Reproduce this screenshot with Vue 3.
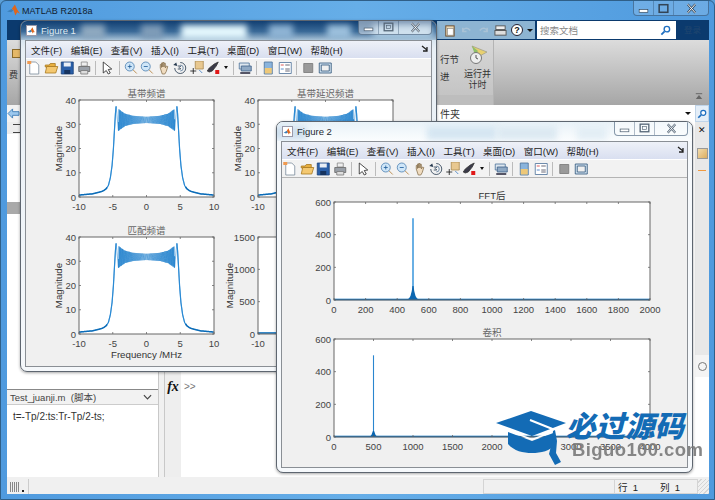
<template>
  <div class="desktop">
    <div class="main-window">
      <div class="main-title">
        <svg class="logo" viewBox="0 0 14 14"><path d="M0 8l3-1.500 2-1 2 1.500-2.500 2z" fill="#3c7fb8" /><path d="M5 5.500L8.500 0.500 11 6l3 4.500-3-1.500-2 3.500-2-6z" fill="#e0661c" /></svg>
        <span>MATLAB R2018a</span>
        <div class="captions main-captions">
          <span class="cap cap-min"><svg viewBox="0 0 12 10"><rect x="2" y="6" width="8" height="2.500" fill="#fff" stroke="#345" stroke-width=".6" /></svg></span>
          <span class="cap cap-max"><svg viewBox="0 0 12 10"><rect x="2" y="1.500" width="8" height="7" fill="none" stroke="#345" stroke-width="1.400" /></svg></span>
          <span class="cap cap-close"><svg viewBox="0 0 12 10"><path d="M2.500 1l7 8M9.500 1l-7 8" stroke="#345" stroke-width="2" /><path d="M2.500 1l7 8M9.500 1l-7 8" stroke="#fff" stroke-width=".9" /></svg></span>
        </div>
      </div>

      <div class="client">
        <div class="top-strip">
          <div class="quick-bar">
            <svg viewBox="0 0 14 14"><rect x="3" y="2" width="9" height="11" fill="#e9d9b8" stroke="#6b4a2a" /><rect x="5" y="5" width="6" height="7" fill="#fff" stroke="#777" stroke-width=".6" /></svg>
            <svg viewBox="0 0 14 14"><path d="M3 8a4 4 0 0 1 7-2l1 1M3 4v4h4" fill="none" stroke="#a9c2d6" stroke-width="1.600" /></svg>
            <svg viewBox="0 0 14 14"><path d="M11 8a4 4 0 0 0-7-2l-1 1M11 4v4h-4" fill="none" stroke="#a9c2d6" stroke-width="1.600" /></svg>
            <svg viewBox="0 0 14 14"><rect x="2" y="2" width="10" height="4" fill="#eee" stroke="#555" /><rect x="1" y="7" width="12" height="5" fill="#ddd" stroke="#555" /></svg>
            <span class="help">?</span>
            <i class="tri"></i>
          </div>
          <div class="search-box">
            <span>搜索文档</span>
            <svg viewBox="0 0 12 12"><circle cx="7.500" cy="4.500" r="3" fill="#fff" stroke="#1f6fc0" stroke-width="1.500" /><path d="M5 7L1.500 10.500" stroke="#1f6fc0" stroke-width="2" /></svg>
          </div>
          <span class="login">登录</span>
        </div>

        <div class="ribbon">
          <div class="ribbon-left">
            <i class="mini-note"></i>
            <span>费</span>
          </div>
          <div class="ribbon-run">
            <div class="run-labels">
              <span>行节</span>
              <span>进</span>
            </div>
            <div class="run-button">
              <svg viewBox="0 0 20 20"><path d="M4 1l15 6-9 5z" fill="#e8d070" stroke="#998" stroke-width=".7" /><path d="M4 1l3 9 3-4z" fill="#8fbf6a" /><circle cx="8" cy="13" r="5.500" fill="#eee" stroke="#777" /><path d="M8 10v3l2 1" fill="none" stroke="#555" /></svg>
              <span>运行并<br />计时</span>
            </div>
          </div>
          <div class="ribbon-rest">
            <svg class="collapse" viewBox="0 0 10 8"><path d="M1 .500h8" stroke="#555" /><path d="M5 2l4 5H1z" fill="#666" /></svg>
          </div>
        </div>

        <div class="address">
          <svg class="back" viewBox="0 0 14 12"><path d="M1 6l5-5v3h7v4H6v3z" fill="#9cc8ee" stroke="#3f7fb8" /></svg>
          <div class="path">
            <span>件夹</span>
            <i class="tri"></i>
          </div>
          <span class="path-search"><svg viewBox="0 0 12 12"><circle cx="7.500" cy="4.500" r="3" fill="#fff" stroke="#1f6fc0" stroke-width="1.500" /><path d="M5 7L1.500 10.500" stroke="#1f6fc0" stroke-width="2" /></svg></span>
        </div>

        <div class="panes">
          <div class="left-col">
            <div class="browser">
              <div class="browser-head"><span class="list-icon"></span></div>
              <div class="browser-row"></div>
              <div class="browser-selected"></div>
            </div>
            <div class="details-head">
              <span>Test_juanji.m &nbsp;(脚本)</span>
              <svg viewBox="0 0 10 6"><path d="M1 1l4 4 4-4" fill="none" stroke="#444" stroke-width="1.300" /></svg>
            </div>
            <div class="details-body">t=-Tp/2:ts:Tr-Tp/2-ts;</div>
          </div>
          <div class="command">
            <div class="gutter"><span class="fx">fx</span></div>
            <span class="prompt">&gt;&gt;</span>
          </div>
          <div class="rail">
            <div class="rail-gray">
              <span class="rail-x">✕</span>
              <i class="rail-note"></i>
              <i class="rail-dash"></i>
            </div>
            <div class="rail-scroll"><span class="rail-circle"></span></div>
            <div class="rail-white"></div>
          </div>
        </div>

        <div class="status">
          <div class="grip"><i></i><b></b></div>
          <div class="status-fill"></div>
          <div class="status-box"></div>
          <div class="status-pos"><span>行&nbsp; 1</span><span>列&nbsp; 1</span></div>
          <div class="status-end"></div>
        </div>
      </div>
    </div>

    <div v-for="fig in figures" :key="fig.name" class="figure" :class="fig.cls">
      <div class="fig-title">
        <span
          v-for="(b, i) in fig.blobs"
          :key="i"
          class="blob"
          :style="{ left: b[0] + 'px', width: b[1] + 'px', background: b[2] }"
        ></span>
        <span class="fig-icon">
          <svg viewBox="0 0 14 14"><path d="M1 9l3-2 2-1 2 2-3 2z" fill="#3c7fb8" /><path d="M6 6l2.500-4 2 5 2 3-2-1-1.500 2.500z" fill="#e0661c" /></svg>
        </span>
        <span class="fig-name">{{ fig.name }}</span>
        <div class="captions fig-captions">
          <span class="cap cap-min"><svg viewBox="0 0 12 10"><rect x="2" y="5.500" width="8" height="2.500" fill="#fff" stroke="#567" stroke-width=".7" /></svg></span>
          <span class="cap cap-max"><svg viewBox="0 0 12 10"><rect x="2" y="1" width="8" height="7" fill="none" stroke="#567" stroke-width="1.200" /><rect x="4" y="3" width="4" height="3" fill="none" stroke="#567" stroke-width=".6" /></svg></span>
          <span class="cap cap-close"><svg viewBox="0 0 12 10"><path d="M2.500 1l7 8M9.500 1l-7 8" stroke="#567" stroke-width="2" /><path d="M2.500 1l7 8M9.500 1l-7 8" stroke="#fff" stroke-width=".8" /></svg></span>
        </div>
      </div>

      <div class="fig-body">
        <div class="fig-menu">
          <span v-for="m in menus" :key="m">{{ m }}</span>
          <svg class="dock-arrow" viewBox="0 0 8 8"><path d="M1 1l5 4M6 2v4H2" fill="none" stroke="#222" stroke-width="1.300" /></svg>
        </div>
        <div class="fig-tools">
          <template v-for="(t, i) in tools" :key="i">
            <i v-if="t === 'sep'" class="tool-sep"></i>
            <i v-else-if="t === 'drop'" class="tool-drop"></i>
            <svg v-else class="tool" viewBox="0 0 14 14">
              <path
                v-for="(p, j) in icons[t]"
                :key="j"
                :d="p[0]"
                :fill="p[1]"
                :stroke="p[2] || 'none'"
                stroke-width=".8"
              />
            </svg>
          </template>
        </div>
        <svg class="fig-canvas" :viewBox="fig.viewBox">
          <g v-for="(p, k) in fig.plots" :key="k">
            <rect :x="p.x" :y="p.y" :width="p.w" :height="p.h" fill="#fff" />
            <path :d="p.curve" fill="none" stroke="#1f80cc" stroke-width=".6" />
            <path v-if="p.edge" :d="p.edge" fill="none" stroke="#2a8ad4" stroke-width="1.200" />
            <path v-if="p.tail" :d="p.tail" fill="none" stroke="#0b6cb8" stroke-width="1.500" />
            <path v-if="p.spike" :d="p.spike" :fill="p.spikeColor" />
            <path v-if="p.base" :d="p.base" fill="#0b66b0" />
            <path :d="p.tickPath" fill="none" stroke="#555" stroke-width=".7" />
            <rect :x="p.x" :y="p.y" :width="p.w" :height="p.h" fill="none" stroke="#666" stroke-width="1" />
            <text
              v-for="t in p.xLabels"
              :key="'x' + t.text"
              :x="t.pos"
              :y="p.y + p.h + 12.500"
              text-anchor="middle"
              class="tick"
            >{{ t.text }}</text>
            <text
              v-for="t in p.yLabels"
              :key="'y' + t.text"
              :x="p.x - 3"
              :y="t.pos + 3.500"
              text-anchor="end"
              class="tick"
            >{{ t.text }}</text>
            <text
              v-if="p.title"
              :x="p.x + p.w / 2"
              :y="p.y - 3.500"
              text-anchor="middle"
              :class="p.titleClass"
            >{{ p.title }}</text>
            <text
              v-if="p.xlabel"
              :x="p.x + p.w / 2"
              :y="p.y + p.h + 24"
              text-anchor="middle"
              class="axis-label"
            >{{ p.xlabel }}</text>
            <text
              v-if="p.ylabel"
              :transform="`translate(${p.x - p.ylabelGap} ${p.y + p.h / 2}) rotate(-90)`"
              text-anchor="middle"
              class="axis-label"
            >{{ p.ylabel }}</text>
          </g>
        </svg>
      </div>
    </div>

    <div class="watermark">
      <svg class="cap-logo" viewBox="0 0 74 56">
        <path d="M36 0L71 12 37 25 1 12z" fill="#136bb5" />
        <path d="M13 21l24 9 24-9v12c-6 7-15 9-24 9s-18-2-24-9z" fill="#136bb5" />
        <path d="M13 19.500l24 9 14-5" fill="none" stroke="#fff" stroke-width="1.500" />
        <path d="M35 9l25 10v9" fill="none" stroke="#fff" stroke-width="2" />
        <path d="M60 19l-2 1-1 11-3 12 6 11 6-3-5-9 1-12z" fill="#136bb5" />
      </svg>
      <div class="mark-text">
        <span class="mark-cn">必过源码</span>
        <span class="mark-en">Biguo100.com</span>
      </div>
    </div>
  </div>
</template>

<script setup>
const menus = ['文件(F)', '编辑(E)', '查看(V)', '插入(I)', '工具(T)', '桌面(D)', '窗口(W)', '帮助(H)']

const tools = [
  'newDoc', 'open', 'save', 'print', 'sep', 'pointer', 'sep',
  'zoomIn', 'zoomOut', 'hand', 'rotate', 'cursor', 'brush', 'drop', 'sep',
  'link', 'sep', 'colorbar', 'legend', 'sep', 'hide', 'dock'
]

// each icon is a list of [d, fill, stroke]
const icons = {
  newDoc: [['M2.500 1h6l3 3v9h-9z', '#fff', '#7a8a9a'], ['M0 0h4v3H0z', '#f09a50']],
  open: [['M1 4h4l1-1.500h5V6H1z', '#e8b040', '#a87820'], ['M1 12l1.500-6.500h11L11.500 12z', '#f4c870', '#a87820']],
  save: [['M1 1h12v12H1z', '#2a5fa8', '#1d4378'], ['M3.500 1.500h7v4h-7z', '#e8eef6'], ['M4 9h6v4H4z', '#16335e']],
  print: [['M4 1h6v4H4z', '#eee', '#888'], ['M1.500 5.500h11v5h-11z', '#9aa0a8', '#666'], ['M3.500 9.500h7v3.500h-7z', '#ddd', '#777']],
  pointer: [['M3 1l0 11 3-2.500 2 3.500 2-1-2-3.500 3.500-.5z', '#fff', '#222']],
  zoomIn: [['M8 8l4.500 4.500', 'none', '#b07830'], ['M1 5.500a4.500 4.500 0 1 0 9 0a4.500 4.500 0 1 0-9 0', '#cfe6f8', '#4b7fb0'], ['M3.500 5.500h4M5.500 3.500v4', 'none', '#1d5a98']],
  zoomOut: [['M8 8l4.500 4.500', 'none', '#b07830'], ['M1 5.500a4.500 4.500 0 1 0 9 0a4.500 4.500 0 1 0-9 0', '#cfe6f8', '#4b7fb0'], ['M3.500 5.500h4', 'none', '#1d5a98']],
  hand: [['M3 7V3.500h1.200V6.500V2h1.300V6V1.500h1.300V6V2.300h1.300V7l1-2 1.400.5-1.500 5-1.500 2.500H5z', '#f0dcc0', '#8a7350']],
  rotate: [['M7 1.500a5.500 5.500 0 1 1-5.500 5.500', 'none', '#25384e'], ['M0 4l3-2.500 1 3.500z', '#25384e'], ['M4.500 5h3l-1.500 1.500 1.500 1.500h-3', 'none', '#25384e'], ['M7 4a3 3 0 0 1 0 6', 'none', '#5a7a9a']],
  cursor: [['M5 0h8v8H5z', '#e8c890', '#aa8a50'], ['M3 7v6M0 10h6', 'none', '#111'], ['M9 9l3 3', 'none', '#3a78c0']],
  brush: [['M1 10l2-3 5-4 4-2-2 4-4 5-3 1z', '#3a3a48', '#333'], ['M9 9h4v4H9z', '#e01818']],
  link: [['M1 2h10v6H1z', '#dde6ee', '#4a7098'], ['M3 5h10v5H3z', '#8fa9c4', '#3d6088'], ['M2 11h10v2H2z', '#556']],
  colorbar: [['M3 1h8v12H3z', '#8ab4dc', '#4a7098'], ['M3.500 7h7v5.500h-7z', '#eec878']],
  legend: [['M1 1.500h12v11H1z', '#fff', '#4a6f98'], ['M2.500 4h3', 'none', '#d03030'], ['M2.500 8h3', 'none', '#3070c0'], ['M7 4h4.500M7 8h4.500M7 10h4.500', 'none', '#445']],
  hide: [['M2.500 2.500h9v9h-9z', '#9a9a9a', '#777']],
  dock: [['M1 2h12v10H1z', '#cfe0ee', '#2d5478'], ['M3 4h8v6H3z', '#f0f0f0', '#2d5478']]
}

const interp = (table, a) => {
  for (let i = 1; i < table.length; i++) {
    if (a <= table[i][0]) {
      const t = (a - table[i - 1][0]) / (table[i][0] - table[i - 1][0])
      return table[i - 1][1] + t * (table[i][1] - table[i - 1][1])
    }
  }
  return table[table.length - 1][1]
}

const flank = [[4.5, 37.4], [4.6, 34.5], [4.75, 27.5], [4.9, 20], [5.1, 13], [5.35, 8], [5.64, 4.8], [6, 3.3], [6.5, 2.4], [7, 2], [8, 1.3], [10, 0.8]]
const ripple = [[0, 1.3], [2, 1.7], [3.2, 2.6], [4, 4.2], [4.15, 4.6]]

// chirp spectrum magnitude, in MHz -> amplitude
const spectrum = (f) => {
  const a = Math.abs(f)
  if (a >= 4.5) return interp(flank, a)
  if (a > 4.15) return 27.2 + ((a - 4.15) / 0.35) * 10.2
  return 31.8 + interp(ripple, a) * Math.cos(a * 30 + a * a * 4)
}

const chirpPaths = (x, y, w, h, yMax) => {
  const sx = (f) => (x + ((f + 10) / 20) * w).toFixed(2)
  const sy = (v) => (y + h - (v / yMax) * h).toFixed(2)
  let curve = ''
  for (let f = -10; f <= 10; f += 0.012) {
    curve += (curve ? 'L' : 'M') + sx(f) + ' ' + sy(spectrum(f))
  }
  const section = (from, to) => {
    let d = ''
    for (let f = from; f <= to; f += 0.05) d += (d ? 'L' : 'M') + sx(f) + ' ' + sy(spectrum(f))
    return d
  }
  return {
    curve,
    edge: section(-5.9, -4.5) + section(4.5, 5.9),
    tail: section(-10, -5.8) + section(5.8, 10)
  }
}

const spread = (labels, from, to) =>
  labels.map((text, i) => ({ text, pos: from + ((to - from) * i) / (labels.length - 1) }))

const makePlot = (cfg) => {
  const { x, y, w, h } = cfg
  const xLabels = spread(cfg.xt, x, x + w)
  const yLabels = spread(cfg.yt, y + h, y)
  let tickPath = ''
  xLabels.forEach((t) => {
    tickPath += `M${t.pos} ${y + h}v-2M${t.pos} ${y}v2`
  })
  yLabels.forEach((t) => {
    tickPath += `M${x} ${t.pos}h2M${x + w} ${t.pos}h-2`
  })
  return { titleClass: 'cn-title', ylabelGap: 17, ...cfg, xLabels, yLabels, tickPath }
}

const freq = ['-10', '-5', '0', '5', '10']
const mag = ['0', '10', '20', '30', '40']

const chirpPlot = (x, y, title, xlabel) =>
  makePlot({
    x, y, w: 135, h: 97, title, xlabel, ylabel: 'Magnitude',
    xt: freq, yt: mag, ...chirpPaths(x, y, 135, 97, 40)
  })

const fftPlot = (y, title, titleClass, xt, peak) => {
  const bottom = y + 98
  const top = y + 16.300
  const { at, half, width, rise, color } = peak
  return makePlot({
    x: 334, y, w: 316, h: 98, title, titleClass,
    xt, yt: ['0', '200', '400', '600'],
    curve: `M334 ${bottom - 0.6}H650`,
    tail: `M334 ${bottom - 0.4}H650`,
    spikeColor: color,
    spike: `M${at - width} ${bottom}V${top}H${at + width}V${bottom}z`,
    base: `M${at - half} ${bottom}Q${at - 1.500} ${bottom - 2} ${at - 0.6} ${bottom - rise}H${at + 0.6}Q${at + 1.500} ${bottom - 2} ${at + half} ${bottom}z`
  })
}

const figures = [
  {
    name: 'Figure 1',
    cls: 'fig-one',
    viewBox: '26 77 405 289',
    blobs: [
      [60, 24, '#8fa9c0'], [120, 22, '#7f9cb8'], [160, 66, '#e4f7fd'],
      [248, 24, '#8fb4d4'], [306, 24, '#9cc0dc'], [352, 60, '#a8c8e0']
    ],
    plots: [
      chirpPlot(79, 100, '基带频谱'),
      chirpPlot(258, 100, '基带延迟频谱'),
      chirpPlot(79, 237, '匹配频谱', 'Frequency /MHz'),
      makePlot({
        x: 258, y: 237, w: 135, h: 97, ylabel: 'Magnitude', ylabelGap: 25,
        xt: freq, yt: ['0', '500', '1000', '1500'],
        curve: 'M258 333H393', tail: 'M258 333H300'
      })
    ]
  },
  {
    name: 'Figure 2',
    cls: 'fig-two',
    viewBox: '282 178 405 289',
    blobs: [
      [-30, 60, '#cfe0ee'], [150, 70, '#d5e6f2'], [220, 60, '#dce9f2'],
      [300, 30, '#e3eef5']
    ],
    plots: [
      fftPlot(202, 'FFT后', 'en-title', ['0', '200', '400', '600', '800', '1000', '1200', '1400', '1600', '1800', '2000'], { at: 413, half: 6, width: 0.9, rise: 14, color: '#5aa8e2' }),
      fftPlot(339, '卷积', 'cn-title', ['0', '500', '1000', '1500', '2000', '2500', '3000', '3500', '4000'], { at: 373.5, half: 4, width: 0.55, rise: 6, color: '#2a86cf' })
    ]
  }
]
</script>

<style>
html,
body {
  margin: 0;
  background: #5a9fd8;
}
</style>

<style scoped>
.desktop {
  position: relative;
  width: 715px;
  height: 500px;
  overflow: hidden;
  font-family: "Liberation Sans", "Noto Sans CJK SC", sans-serif;
  color: #333;
}
.main-window {
  width: 715px;
  height: 500px;
  display: flex;
  flex-direction: column;
  box-sizing: border-box;
  background: linear-gradient(90deg, #4f9ade 0%, #66aee8 50%, #4f9ade 100%);
  border: 1px solid #2f5f88;
  border-radius: 6px 6px 0 0;
}
.main-title {
  height: 19px;
  flex: none;
  display: flex;
  align-items: center;
  padding-left: 6px;
  gap: 2px;
  font-size: 9px;
  letter-spacing: 0.1px;
  color: #10202e;
  position: relative;
}
.logo {
  width: 13px;
  height: 13px;
}
.captions {
  position: absolute;
  display: flex;
  top: 0;
  border: 1px solid rgba(40, 70, 100, 0.55);
  border-top: 0;
  border-radius: 0 0 4px 4px;
  overflow: hidden;
  background: rgba(255, 255, 255, 0.16);
}
.cap {
  display: flex;
  align-items: center;
  justify-content: center;
  height: 100%;
  border-right: 1px solid rgba(40, 70, 100, 0.35);
}
.cap:last-child {
  border-right: 0;
}
.cap svg {
  width: 13px;
  height: 11px;
}
.main-captions {
  right: 5px;
  height: 14px;
  width: 74px;
}
.fig-captions {
  right: 4px;
  height: 13px;
  width: 72px;
  background: rgba(255, 255, 255, 0.45);
  z-index: 1;
}
.cap-min,
.cap-max {
  width: 19px;
}
.cap-close {
  flex: 1;
}

.client {
  flex: 1;
  display: flex;
  flex-direction: column;
  margin: 0 5px 5px 6px;
  background: #f0f0f0;
  min-height: 0;
}
.top-strip {
  height: 20px;
  flex: none;
  display: flex;
  align-items: stretch;
  background: #0b3a6e;
  padding: 1px 0 1px 430px;
  box-sizing: border-box;
}
.quick-bar {
  width: 98px;
  margin-right: 2px;
  display: flex;
  align-items: center;
  justify-content: flex-end;
  gap: 4px;
  padding-right: 2px;
  box-sizing: border-box;
  background: #8db4d2;
}
.quick-bar svg {
  width: 13px;
  height: 13px;
}
.help {
  width: 12px;
  height: 12px;
  border-radius: 50%;
  background: #fff;
  border: 1px solid #223;
  box-sizing: border-box;
  font: bold 9px/10px "Liberation Sans", sans-serif;
  text-align: center;
  color: #111;
}
.tri {
  width: 0;
  height: 0;
  border: 3px solid transparent;
  border-top: 3px solid #111;
  border-bottom: 0;
}
.search-box {
  width: 139px;
  display: flex;
  align-items: center;
  justify-content: space-between;
  background: #fff;
  padding: 0 5px 0 3px;
  box-sizing: border-box;
  font-size: 9.500px;
  color: #888;
}
.search-box svg {
  width: 11px;
  height: 11px;
}
.login {
  flex: 1;
  text-align: center;
  font-size: 8.500px;
  line-height: 18px;
  color: #20466e;
}

.ribbon {
  height: 65px;
  flex: none;
  display: flex;
  font-size: 9.500px;
  background: linear-gradient(#dcdcdc, #a6a6a6);
}
.ribbon-left {
  width: 13px;
  display: flex;
  flex-direction: column;
  align-items: center;
  padding-top: 9px;
  gap: 10px;
  font-size: 9px;
  overflow: hidden;
}
.mini-note {
  width: 7px;
  height: 7px;
  margin-left: 6px;
  background: #e4b868;
  border: 1px solid #8a6a2a;
}
.ribbon-run {
  width: 57px;
  margin-left: 417px;
  display: flex;
  padding-top: 12px;
  box-sizing: border-box;
  background: linear-gradient(#d8d8d8 0, #c4c4c4 85%, #bdbdbd 85%, #bdbdbd 100%);
  border-right: 1px solid #b4b4b4;
}
.run-labels {
  width: 27px;
  display: flex;
  flex-direction: column;
  gap: 3px;
  padding: 0 0 0 3px;
  box-sizing: border-box;
}
.run-button {
  display: flex;
  flex-direction: column;
  align-items: center;
  margin-top: -8px;
  text-align: center;
  line-height: 11px;
  font-size: 9px;
}
.run-button svg {
  width: 20px;
  height: 22px;
  margin-bottom: 3px;
}
.ribbon-rest {
  flex: 1;
  display: flex;
  align-items: flex-end;
  justify-content: flex-end;
  padding: 0 6px 5px 0;
}
.collapse {
  width: 8px;
  height: 7px;
}

.address {
  height: 17px;
  flex: none;
  display: flex;
  align-items: center;
  background: #f2f2f2;
  font-size: 10px;
}
.back {
  width: 13px;
  height: 11px;
  flex: none;
}
.path {
  flex: 1;
  height: 100%;
  background: #fff;
  display: flex;
  align-items: center;
  justify-content: space-between;
  padding: 0 4px 0 420px;
}
.path-search {
  width: 14px;
  height: 100%;
  background: #e4eef8;
  border: 1px solid #c0d4e8;
  box-sizing: border-box;
  display: flex;
  align-items: center;
  justify-content: center;
}
.path-search svg {
  width: 10px;
  height: 10px;
}

.panes {
  flex: 1;
  display: flex;
  min-height: 0;
  padding-bottom: 2px;
  box-sizing: border-box;
}
.left-col {
  width: 151px;
  display: flex;
  flex-direction: column;
  border-right: 1px solid #c8c8c8;
  background: #fff;
}
.browser {
  flex: 1;
}
.browser-head {
  height: 12px;
  background: #ececec;
  padding: 2px 0 0 6px;
  box-sizing: border-box;
}
.list-icon {
  display: block;
  width: 7px;
  height: 7px;
  border-top: 1px solid #444;
  border-bottom: 1px solid #444;
}
.browser-row {
  height: 68px;
}
.browser-selected {
  height: 12px;
  background: #a9a9a9;
}
.details-head {
  height: 16px;
  flex: none;
  display: flex;
  align-items: center;
  justify-content: space-between;
  box-sizing: border-box;
  padding: 0 6px 0 3px;
  background: #f2f2f2;
  border-top: 1px solid #888;
  border-bottom: 1px solid #ccc;
  font-size: 9.500px;
  color: #444;
}
.details-head svg {
  width: 9px;
  height: 6px;
}
.details-body {
  height: 72px;
  flex: none;
  padding: 6px 0 0 6px;
  box-sizing: border-box;
  font-size: 10px;
  color: #333;
}
.command {
  flex: 1;
  margin-left: 5px;
  display: flex;
  align-items: flex-end;
  background: #fff;
  border-left: 1px solid #c8c8c8;
  position: relative;
}
.gutter {
  width: 16px;
  height: 100%;
  flex: none;
  background: #eeeeee;
  display: flex;
  flex-direction: column;
  justify-content: flex-end;
  align-items: center;
  padding-bottom: 83px;
  box-sizing: border-box;
}
.fx {
  font: italic bold 14px/14px "Liberation Serif", serif;
  color: #111;
}
.prompt {
  font-size: 10px;
  color: #777;
  margin: 0 0 85px 3px;
}
.rail {
  width: 14px;
  flex: none;
  display: flex;
  flex-direction: column;
  background: #fff;
}
.rail-gray {
  height: 233px;
  background: #e8e8e8;
  display: flex;
  flex-direction: column;
  align-items: center;
}
.rail-x {
  font-size: 9px;
  margin-top: 3px;
  color: #111;
}
.rail-note {
  width: 9px;
  height: 9px;
  margin-top: 13px;
  background: linear-gradient(135deg, #f2dcae, #dcae60);
  border: 1px solid #999;
}
.rail-dash {
  width: 8px;
  height: 1px;
  margin-top: 11px;
  background: #f09a40;
}
.rail-scroll {
  height: 22px;
  background: #f4f4f4;
  display: flex;
  justify-content: center;
  padding-top: 7px;
  box-sizing: border-box;
}
.rail-circle {
  width: 9px;
  height: 9px;
  border: 1px solid #777;
  border-radius: 50%;
  box-sizing: border-box;
}
.rail-white {
  flex: 1;
}

.status {
  height: 15px;
  flex: none;
  display: flex;
  align-items: stretch;
  font-size: 9.500px;
  background: #f0f0f0;
}
.grip {
  width: 22px;
  flex: none;
  box-sizing: border-box;
  padding: 3px 0 2px 3px;
  display: flex;
  align-items: flex-end;
  gap: 2px;
  border-right: 1px solid #ccc;
}
.grip i {
  width: 10px;
  height: 10px;
  background: repeating-linear-gradient(90deg, #888 0 1px, transparent 1px 2px);
}
.grip b {
  width: 2px;
  height: 2px;
  background: #222;
}
.status-fill {
  flex: 1;
}
.status-box {
  width: 132px;
  flex: none;
  box-sizing: border-box;
  border: 1px solid #d4d4d4;
}
.status-pos {
  width: 83px;
  flex: none;
  display: flex;
  align-items: center;
  gap: 22px;
  padding-left: 3px;
  box-sizing: border-box;
  color: #222;
  border: 1px solid #d4d4d4;
  border-left: 0;
}
.status-end {
  width: 11px;
  flex: none;
  background: repeating-linear-gradient(135deg, #f0f0f0 0 2px, #bbb 2px 3px);
  opacity: 0.5;
}

.figure {
  position: absolute;
  width: 417px;
  height: 352px;
  box-sizing: border-box;
  border: 1px solid #5e6670;
  border-radius: 7px;
  box-shadow: 0 1px 3px rgba(0, 0, 0, 0.35);
  display: flex;
  flex-direction: column;
  padding: 0 4px 4px;
  overflow: hidden;
}
.fig-one {
  left: 20px;
  top: 20px;
  background: linear-gradient(#b8d0e4 0, #e8eff5 8%, #f5f8fb 100%);
}
.fig-two {
  left: 276px;
  top: 121px;
  background: #f6f9fc;
}
.fig-title {
  height: 19px;
  flex: none;
  position: relative;
  display: flex;
  align-items: center;
  gap: 4px;
  margin: 0 -4px;
  padding-left: 5px;
  font-size: 9.500px;
  color: #1e2a34;
  overflow: hidden;
}
.fig-one .fig-title {
  background: linear-gradient(#123f72 0, #3a6a98 55%, #a9c3d8 100%);
}
.fig-one .fig-name {
  color: #dfe9f1;
}
.fig-two .fig-title {
  background: linear-gradient(#e9f2f8, #fbfdfe);
}
.blob {
  position: absolute;
  top: 4px;
  height: 14px;
  filter: blur(3px);
}
.fig-icon {
  width: 11px;
  height: 11px;
  background: #fff;
  border: 1px solid #99a;
  box-sizing: border-box;
  position: relative;
  display: flex;
}
.fig-name {
  position: relative;
}
.fig-body {
  flex: 1;
  min-height: 0;
  display: flex;
  flex-direction: column;
  background: #f0f0f0;
  border: 1px solid #8a8f95;
}
.fig-menu {
  height: 17px;
  flex: none;
  display: flex;
  align-items: center;
  gap: 8.500px;
  padding-left: 5px;
  font-size: 9.500px;
  color: #222;
  background: linear-gradient(#eef1f8, #d9dff0);
  border-bottom: 1px solid #fff;
  position: relative;
}
.dock-arrow {
  position: absolute;
  right: 2px;
  top: 4px;
  width: 8px;
  height: 8px;
}
.fig-tools {
  height: 17px;
  flex: none;
  display: flex;
  align-items: center;
  border-bottom: 1px solid #b4b4b4;
  background: #f2f2f2;
}
.tool {
  width: 16.500px;
  height: 14px;
  flex: none;
}
.tool-sep {
  width: 1px;
  height: 14px;
  margin: 0 3px;
  background: #bbb;
  flex: none;
}
.tool-drop {
  width: 0;
  height: 0;
  margin: 0 2px;
  border: 2.500px solid transparent;
  border-top: 3px solid #111;
  border-bottom: 0;
  flex: none;
}
.fig-canvas {
  flex: 1;
  min-height: 0;
  width: 100%;
  display: block;
}
.tick {
  font: 9.500px "Liberation Sans", sans-serif;
  fill: #444;
}
.axis-label {
  font: 9.700px "Liberation Sans", sans-serif;
  fill: #333;
}
.cn-title {
  font: 9.500px "Noto Sans CJK SC", sans-serif;
  fill: #666;
}
.en-title {
  font: 9.500px "Liberation Sans", "Noto Sans CJK SC", sans-serif;
  fill: #333;
}

.watermark {
  position: absolute;
  left: 495px;
  top: 411px;
  display: flex;
  gap: 3px;
}
.cap-logo {
  width: 74px;
  height: 56px;
  flex: none;
}
.mark-text {
  display: flex;
  flex-direction: column;
  align-items: flex-start;
  margin-top: -2px;
}
.mark-cn {
  font: italic 900 29.500px/31px "Noto Sans CJK SC", sans-serif;
  color: #136bb5;
  margin-left: -6px;
  white-space: nowrap;
}
.mark-en {
  font: bold 18.500px/19px "Liberation Sans", sans-serif;
  color: #7a7a7a;
  opacity: 0.9;
  letter-spacing: 0.4px;
  white-space: nowrap;
}
</style>
